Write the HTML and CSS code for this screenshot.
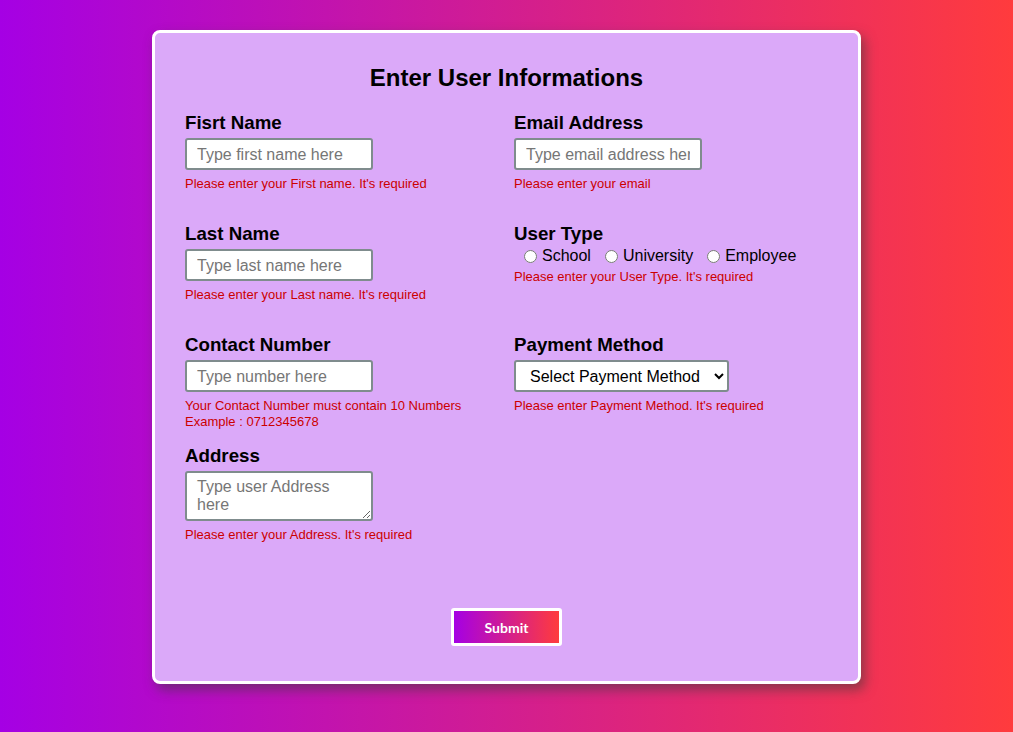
FILE: index.html
```html
<!DOCTYPE html>
<html>
<head>
<meta charset="utf-8">
<link rel="stylesheet" href="styles.css">
</head>
<body>
<div class="card">
  <h2 class="title">Enter User Informations</h2>
  <div class="grid">
    <div class="field">
      <label class="lbl">Fisrt Name</label>
      <input class="inp" type="text" placeholder="Type first name here">
      <div class="err">Please enter your First name. It's required</div>
    </div>
    <div class="field">
      <label class="lbl">Email Address</label>
      <input class="inp" type="text" placeholder="Type email address here">
      <div class="err">Please enter your email</div>
    </div>
    <div class="field">
      <label class="lbl">Last Name</label>
      <input class="inp" type="text" placeholder="Type last name here">
      <div class="err">Please enter your Last name. It's required</div>
    </div>
    <div class="field">
      <label class="lbl">User Type</label>
      <div class="radios">
        <label class="radio"><input type="radio" name="ut">School</label>
        <label class="radio"><input type="radio" name="ut">University</label>
        <label class="radio"><input type="radio" name="ut">Employee</label>
      </div>
      <div class="err err-tight">Please enter your User Type. It's required</div>
    </div>
    <div class="field">
      <label class="lbl">Contact Number</label>
      <input class="inp" type="text" placeholder="Type number here">
      <div class="err">Your Contact Number must contain 10 Numbers<br>Example : 0712345678</div>
    </div>
    <div class="field">
      <label class="lbl">Payment Method</label>
      <select class="sel"><option>Select Payment Method</option></select>
      <div class="err">Please enter Payment Method. It's required</div>
    </div>
    <div class="field">
      <label class="lbl">Address</label>
      <textarea class="inp ta" placeholder="Type user Address here"></textarea>
      <div class="err">Please enter your Address. It's required</div>
    </div>
  </div>
  <div class="actions">
    <button class="submit" type="button">Submit</button>
  </div>
</div>
</body>
</html>
```
FILE: styles.css
```css
html, body {
  margin: 0;
  padding: 0;
}
body {
  width: 1013px;
  height: 732px;
  background: linear-gradient(to right, #a500e4, #ff3b3d);
  font-family: "Liberation Sans", Arial, sans-serif;
  padding-top: 30px;
  box-sizing: border-box;
  overflow: hidden;
}
.card {
  width: 709px;
  height: 654px;
  margin: 0 auto;
  box-sizing: border-box;
  background: #dba9f9;
  border: 3px solid #fff;
  border-radius: 8px;
  box-shadow: 4px 6px 12px rgba(60, 60, 60, 0.55);
  padding: 31px 30px 0 30px;
}
.title {
  margin: 0;
  font-size: 24px;
  line-height: 28px;
  font-weight: bold;
  text-align: center;
  color: #000;
}
.grid {
  margin-top: 19px;
  display: grid;
  grid-template-columns: 329px 1fr;
  grid-auto-rows: 111px;
}
.field {
  display: flex;
  flex-direction: column;
  align-items: flex-start;
}
.lbl {
  font-size: 18.72px;
  line-height: 23px;
  font-weight: bold;
  color: #000;
}
.inp {
  margin-top: 4px;
  width: 188px;
  height: 32px;
  box-sizing: border-box;
  border: 2px solid #7f8c8d;
  border-radius: 3px;
  padding: 1px 10px 0 10px;
  font-family: "Liberation Sans", Arial, sans-serif;
  font-size: 16px;
  background: #fff;
  outline: none;
}
.inp::placeholder {
  color: #767676;
}
.ta {
  height: 50px;
  padding: 5px 10px 0 10px;
  line-height: 18px;
  resize: both;
}
.err {
  margin-top: 6px;
  font-size: 13px;
  line-height: 16px;
  color: #cc0000;
}
.err-tight {
  margin-top: 3px;
}
.radios {
  display: flex;
  margin-top: 1px;
  padding-left: 6px;
  gap: 10px;
  font-size: 16px;
  line-height: 20px;
  color: #000;
}
.radio {
  display: flex;
  align-items: center;
}
.radio input {
  margin: 0 5px 0 4px;
  width: 13px;
  height: 13px;
}
.sel {
  margin-top: 4px;
  width: 215px;
  height: 32px;
  box-sizing: border-box;
  border: 2px solid #7f8c8d;
  border-radius: 3px;
  padding: 0 6px 0 10px;
  font-family: "Liberation Sans", Arial, sans-serif;
  font-size: 16px;
  background: #fff;
  color: #000;
}
.actions {
  display: flex;
  justify-content: center;
  margin-top: 53px;
}
.submit {
  width: 111px;
  height: 38px;
  border: 3px solid #fff;
  border-radius: 3px;
  background: linear-gradient(to right, #a500e4, #ff3b3d);
  color: #fff;
  font-family: Lato, "Open Sans", sans-serif;
  font-weight: bold;
  font-size: 14px;
  padding: 0;
}
```
